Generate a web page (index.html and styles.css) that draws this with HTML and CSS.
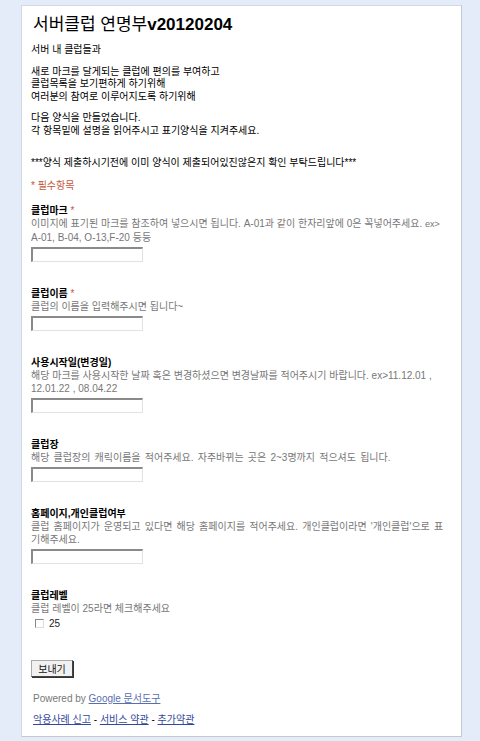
FILE: index.html
```html
<!DOCTYPE html>
<html lang="ko">
<head>
  <meta charset="UTF-8">
  <meta name="viewport" content="width=device-width, initial-scale=1.0">
  <title>서버클럽 연명부v20120204</title>
  <link rel="stylesheet" href="styles.css">
</head>
<body>
  <div class="form-card">
    <h1 class="form-title"><span class="title-ko">서버클럽 연명부</span>v20120204</h1>
    <div class="form-desc">
      <p>서버 내 클럽들과</p>
      <p>새로 마크를 달게되는 클럽에 편의를 부여하고<br>클럽목록을 보기편하게 하기위해<br>여러분의 참여로 이루어지도록 하기위해</p>
      <p>다음 양식을 만들었습니다.<br>각 항목밑에 설명을 읽어주시고 표기양식을 지켜주세요.</p>
      <p class="notice">***양식 제출하시기전에 이미 양식이 제출되어있진않은지 확인 부탁드립니다***</p>
    </div>
    <div class="required-note">* 필수항목</div>

    <form class="questions" onsubmit="return false;">
      <div class="item">
        <label class="item-title">클럽마크 <span class="req">*</span></label>
        <div class="help">이미지에 표기된 마크를 참조하여 넣으시면 됩니다. A-01과 같이 한자리앞에 0은 꼭넣어주세요. <span class="small">ex&gt;</span> A-01, B-04, O-13,F-20 등등</div>
        <input class="text-box" type="text">
      </div>

      <div class="item">
        <label class="item-title">클럽이름 <span class="req">*</span></label>
        <div class="help">클럽의 이름을 입력해주시면 됩니다~</div>
        <input class="text-box" type="text">
      </div>

      <div class="item">
        <label class="item-title">사용시작일(변경일)</label>
        <div class="help">해당 마크를 사용시작한 날짜 혹은 변경하셨으면 변경날짜를 적어주시기 바랍니다. ex&gt;11.12.01 , 12.01.22 , 08.04.22</div>
        <input class="text-box" type="text">
      </div>

      <div class="item">
        <label class="item-title">클럽장</label>
        <div class="help spaced">해당 클럽장의 캐릭이름을 적어주세요. 자주바뀌는 곳은 2~3명까지 적으셔도 됩니다.</div>
        <input class="text-box" type="text">
      </div>

      <div class="item">
        <label class="item-title">홈페이지,개인클럽여부</label>
        <div class="help spaced">클럽 홈페이지가 운영되고 있다면 해당 홈페이지를 적어주세요. 개인클럽이라면 '개인클럽'으로 표기해주세요.</div>
        <input class="text-box" type="text">
      </div>

      <div class="item">
        <label class="item-title">클럽레벨</label>
        <div class="help">클럽 레벨이 25라면 체크해주세요</div>
        <label class="check-row"><input class="check-box" type="checkbox"> 25</label>
      </div>

      <div class="submit-row">
        <button class="submit-btn" type="submit">보내기</button>
      </div>
    </form>

    <div class="footer">
      <p class="powered">Powered by <a href="#">Google 문서도구</a></p>
      <p class="links"><a href="#">악용사례 신고</a> - <a href="#">서비스 약관</a> - <a href="#">추가약관</a></p>
    </div>
  </div>
</body>
</html>
```

FILE: styles.css
```css
body {
  margin: 0;
  padding: 5px 0 5px 21px;
  background-color: #e5ecf9;
  font-family: "Liberation Sans", "Noto Sans CJK KR", sans-serif;
  font-size: 10px;
  color: #000;
}

.form-card {
  width: 420px;
  background-color: #fff;
  border: 1px solid #d3d9e4;
  border-right-color: #c4cad4;
  border-bottom-color: #c4cad4;
  padding: 7px 10px 10px 9px;
}

.form-title {
  font-size: 17px;
  font-weight: bold;
  line-height: 22px;
  margin: 1px 0 0 2px;
}

.title-ko {
  font-weight: normal;
}

.form-desc p {
  margin: 0 0 9px;
  line-height: 12.5px;
}

.form-desc p:first-child {
  margin-top: 8px;
}

.form-desc .notice {
  margin-top: 20px;
}

.required-note {
  color: #c4573c;
  line-height: 13px;
  margin-top: 9px;
}

.questions {
  margin: 12px 0 0;
}

.item {
  margin-bottom: 25px;
}

.item-title {
  display: block;
  font-weight: bold;
  line-height: 13px;
}

.req {
  color: #c4573c;
  font-weight: normal;
}

.help {
  color: #777;
  line-height: 13px;
}

/* spaces in the original font are a bit wider */
.help.spaced {
  word-spacing: 1.4px;
}

.help .small {
  font-size: 9px;
}

.text-box {
  display: block;
  box-sizing: border-box;
  width: 112px;
  height: 15px;
  margin: 3px 0 0;
  padding: 0;
  border: 1px solid #e2e2e2;
  border-top: 2px solid #8a8a8a;
  border-left: 2px solid #8a8a8a;
  background: #fff;
}

.check-row {
  display: flex;
  align-items: center;
  gap: 5px;
  margin: 2px 0 0 4px;
  line-height: 13px;
  color: #222;
}

.check-box {
  appearance: none;
  -webkit-appearance: none;
  width: 9px;
  height: 9px;
  margin: 0;
  border: 1px solid #ddd;
  border-top-color: #888;
  border-left-color: #888;
  background: #fff;
}

.submit-row {
  margin-top: 30px;
}

.submit-btn {
  width: 42px;
  height: 17px;
  padding: 0;
  font-family: "Liberation Sans", "Noto Sans CJK KR", sans-serif;
  font-size: 10px;
  color: #111;
  background: #f1f1f1;
  border: 1px solid #444;
  border-top-color: #aaa;
  border-left-color: #aaa;
  box-shadow: 1px 1px 0 #333;
}

.footer {
  margin-top: 15px;
  padding-left: 2px;
}

.footer p {
  margin: 0;
  line-height: 13px;
}

.powered {
  color: #777;
}

.links {
  margin-top: 8px !important;
}

.footer a {
  color: #34479b;
  text-decoration: underline;
}

.powered a {
  color: #5a6fb0;
}
```
